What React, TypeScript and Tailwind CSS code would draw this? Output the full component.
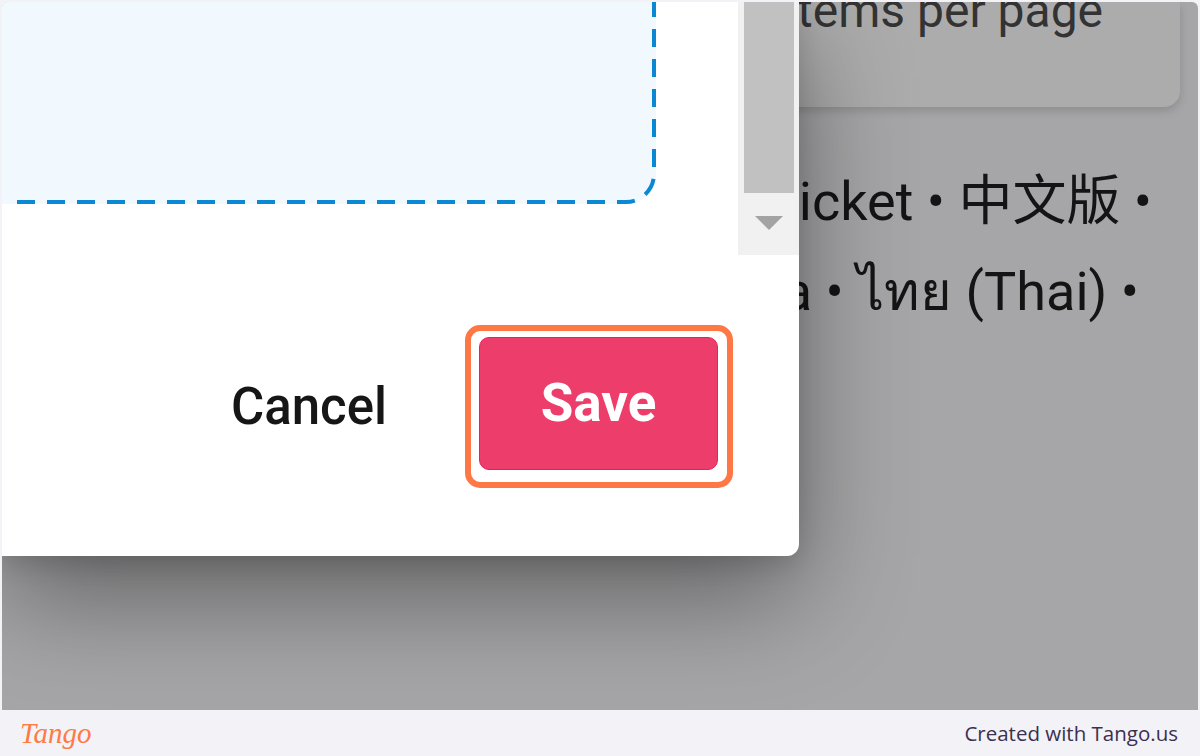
export default function App() {
  return (
    <div className="flex h-[756px] w-[1200px] flex-col overflow-hidden bg-[#f3f2f7] font-['Roboto',sans-serif]">
      <div className="relative mx-[2px] mt-[2px] h-[708px] overflow-hidden rounded-t-[6px] bg-[#a6a6a8]">
        {/* page behind the modal */}
        <div className="flex flex-col items-end pr-[18px]">
          <div className="h-[105px] w-[640px] overflow-hidden rounded-br-[16px] bg-[#acacac] pl-[244px] shadow-[0_4px_10px_rgba(0,0,0,0.15)]">
            <p className="-mt-[14px] whitespace-nowrap text-[48px] leading-[46px] text-[#333]">Items per page</p>
          </div>
          <div className="mt-[50px] flex flex-col items-end text-[54px] text-[#141414] font-['Roboto','Noto_Sans_CJK_SC',sans-serif]">
            <p className="mr-[28px] h-[90px] whitespace-nowrap leading-[90px]">English • Ticket • 中文版 •</p>
            <p className="mr-[41px] h-[90px] whitespace-nowrap leading-[90px]">Bahasa Indonesia • ไทย (Thai) •</p>
          </div>
        </div>

        {/* modal */}
        <div className="absolute left-0 top-0 flex h-[554px] w-[797px] flex-col rounded-br-[12px] bg-white shadow-[0_40px_110px_rgba(0,0,0,0.42),0_8px_24px_rgba(0,0,0,0.12)]">
          <div className="flex h-[253px]">
            <div className="flex flex-1 flex-col overflow-hidden pb-[51px] pr-[82px]">
              <div className="relative -ml-[30px] h-[202px] rounded-br-[28px] bg-[#f1f9fe]">
                <svg className="absolute inset-0" width="684" height="202" viewBox="0 0 684 202" fill="none">
                  <path
                    d="M45 200 H654 A28 28 0 0 0 682 172 V0"
                    stroke="#0a88d4"
                    strokeWidth="4"
                    strokeDasharray="18 12"
                  />
                </svg>
              </div>
            </div>
            <div className="flex w-[61px] flex-col bg-[#f1f1f1]">
              <div className="ml-[6px] mr-[5px] h-[191px] bg-[#c1c1c1]" />
              <div className="flex justify-center pt-[23px]">
                <svg width="28" height="14" viewBox="0 0 28 14">
                  <polygon points="0,0 28,0 14,14" fill="#a3a3a3" />
                </svg>
              </div>
            </div>
          </div>

          <div className="flex items-start justify-end pr-[66px] pt-[70px]">
            <div className="flex h-[164px] items-center">
              <button className="mr-[78px] text-[51px] font-medium text-[#161616]">Cancel</button>
            </div>
            <div className="rounded-[15px] border-[6px] border-[#ff7744] pb-[12px] pl-[8px] pr-[9px] pt-[6px]">
              <button className="flex h-[133px] w-[239px] items-center justify-center rounded-[10px] border border-[#e0245a] bg-[#ed3e6b] text-[53px] font-bold text-white">
                Save
              </button>
            </div>
          </div>
        </div>
      </div>

      <footer className="flex flex-1 items-center justify-between pl-[20px] pr-[22px]">
        <span className="font-['Liberation_Serif',serif] text-[29px] italic leading-none text-[#ff7a45]">Tango</span>
        <span className="font-['Open_Sans',sans-serif] text-[20.5px] text-[#3b3050]">Created with Tango.us</span>
      </footer>
    </div>
  );
}
